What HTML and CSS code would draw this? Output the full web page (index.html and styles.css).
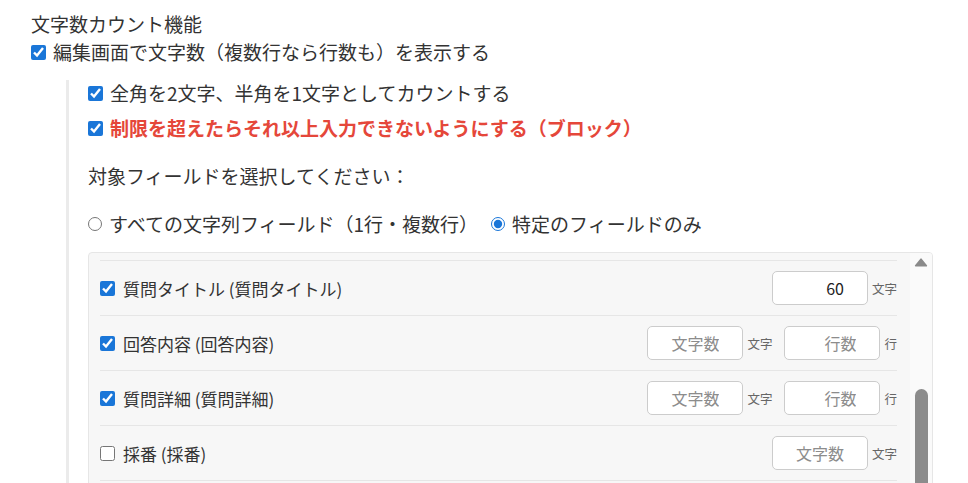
FILE: index.html
```html
<!DOCTYPE html>
<html lang="ja">
<head>
<meta charset="utf-8">
<title>文字数カウント機能</title>
<link rel="stylesheet" href="styles.css">
</head>
<body>
<div class="page">
  <div class="title">文字数カウント機能</div>
  <label class="check-line main-check"><input type="checkbox" checked><span>編集画面で文字数（複数行なら行数も）を表示する</span></label>
  <div class="sub">
    <label class="check-line"><input type="checkbox" checked><span>全角を2文字、半角を1文字としてカウントする</span></label>
    <label class="check-line block-line"><input type="checkbox" checked><span class="danger">制限を超えたらそれ以上入力できないようにする（ブロック）</span></label>
    <div class="prompt">対象フィールドを選択してください：</div>
    <div class="radios">
      <label class="radio"><input type="radio" name="target"><span>すべての文字列フィールド（1行・複数行）</span></label>
      <label class="radio"><input type="radio" name="target" checked><span>特定のフィールドのみ</span></label>
    </div>
    <div class="panel">
      <div class="list">
        <div class="row">
          <label class="field"><input type="checkbox" checked><span>質問タイトル (質問タイトル)</span></label>
          <div class="limits">
            <div class="limit"><input class="num" type="text" value="60" placeholder="文字数"><span class="unit">文字</span></div>
          </div>
        </div>
        <div class="row">
          <label class="field"><input type="checkbox" checked><span>回答内容 (回答内容)</span></label>
          <div class="limits">
            <div class="limit"><input class="num" type="text" placeholder="文字数"><span class="unit">文字</span></div>
            <div class="limit"><input class="num" type="text" placeholder="行数"><span class="unit">行</span></div>
          </div>
        </div>
        <div class="row">
          <label class="field"><input type="checkbox" checked><span>質問詳細 (質問詳細)</span></label>
          <div class="limits">
            <div class="limit"><input class="num" type="text" placeholder="文字数"><span class="unit">文字</span></div>
            <div class="limit"><input class="num" type="text" placeholder="行数"><span class="unit">行</span></div>
          </div>
        </div>
        <div class="row">
          <label class="field"><input type="checkbox"><span>採番 (採番)</span></label>
          <div class="limits">
            <div class="limit"><input class="num" type="text" placeholder="文字数"><span class="unit">文字</span></div>
          </div>
        </div>
        <div class="row"></div>
      </div>
      <div class="scrollbar">
        <svg class="arrow" width="16" height="11" viewBox="0 0 16 11"><polygon points="8,1.5 14.5,9.5 1.5,9.5" fill="#8a8a8a" stroke="#8a8a8a" stroke-width="2" stroke-linejoin="round"/></svg>
        <div class="thumb"></div>
      </div>
    </div>
  </div>
</div>
</body>
</html>
```

FILE: styles.css
```css
html, body {
  margin: 0;
  padding: 0;
  overflow: hidden;
  background: #ffffff;
}

body {
  font-family: "Noto Sans CJK JP", "Noto Sans", sans-serif;
  color: #333333;
  font-size: 19px;
}

input[type="checkbox"],
input[type="radio"] {
  accent-color: #1a76d8;
  margin: 0;
  flex: none;
}

input[type="checkbox"] {
  width: 15px;
  height: 15px;
}

input[type="radio"] {
  width: 14px;
  height: 14px;
}

.page {
  padding: 10px 0 0 31px;
}

.title {
  line-height: 28px;
  height: 28px;
}

.check-line {
  display: flex;
  align-items: center;
  gap: 7px;
  height: 26px;
  line-height: 26px;
}

.main-check {
  margin-top: 0;
  height: 28px;
  line-height: 28px;
}

.sub {
  margin-left: 35px;
  margin-top: 14px;
  border-left: 3px solid #ebebeb;
  padding-left: 19px;
}

.block-line {
  margin-top: 9px;
}

.danger {
  color: #e5473a;
  font-weight: bold;
}

.prompt {
  margin-top: 22px;
  height: 26px;
  line-height: 26px;
}

.radios {
  margin-top: 22px;
  display: flex;
  align-items: center;
  height: 26px;
  line-height: 26px;
  gap: 13px;
}

.radio {
  display: flex;
  align-items: center;
  gap: 7px;
}

.panel {
  margin-top: 15px;
  width: 843px;
  height: 300px;
  border: 1px solid #e6e6e6;
  border-radius: 4px;
  background: #f7f7f7;
  display: flex;
  overflow: hidden;
}

.list {
  flex: 1;
  padding: 7px 13px 0 11px;
}

.row {
  border-top: 1px solid #e6e6e6;
  height: 54px;
  display: flex;
  align-items: center;
}

.field {
  display: flex;
  align-items: center;
  gap: 8px;
  font-size: 17px;
}

.limits {
  margin-left: auto;
  display: flex;
  align-items: center;
  gap: 12px;
}

.limit {
  display: flex;
  align-items: center;
  gap: 4px;
}

.num {
  box-sizing: border-box;
  width: 96px;
  height: 34px;
  border: 1px solid #cccccc;
  border-radius: 5px;
  background: #ffffff;
  font-family: "Noto Sans CJK JP", "Noto Sans", sans-serif;
  font-size: 16px;
  color: #222222;
  text-align: right;
  padding: 0 23px 0 6px;
  outline: none;
}

.num::placeholder {
  color: #8c8c8c;
}

.unit {
  font-size: 12.5px;
  color: #666666;
}

.scrollbar {
  width: 22px;
  background: #fafafa;
  display: flex;
  flex-direction: column;
  align-items: center;
  padding-top: 5px;
}

.arrow {
  display: block;
}

.thumb {
  margin-top: 122px;
  width: 13px;
  height: 200px;
  border-radius: 7px 7px 0 0;
  background: #8c8c8c;
}
```
